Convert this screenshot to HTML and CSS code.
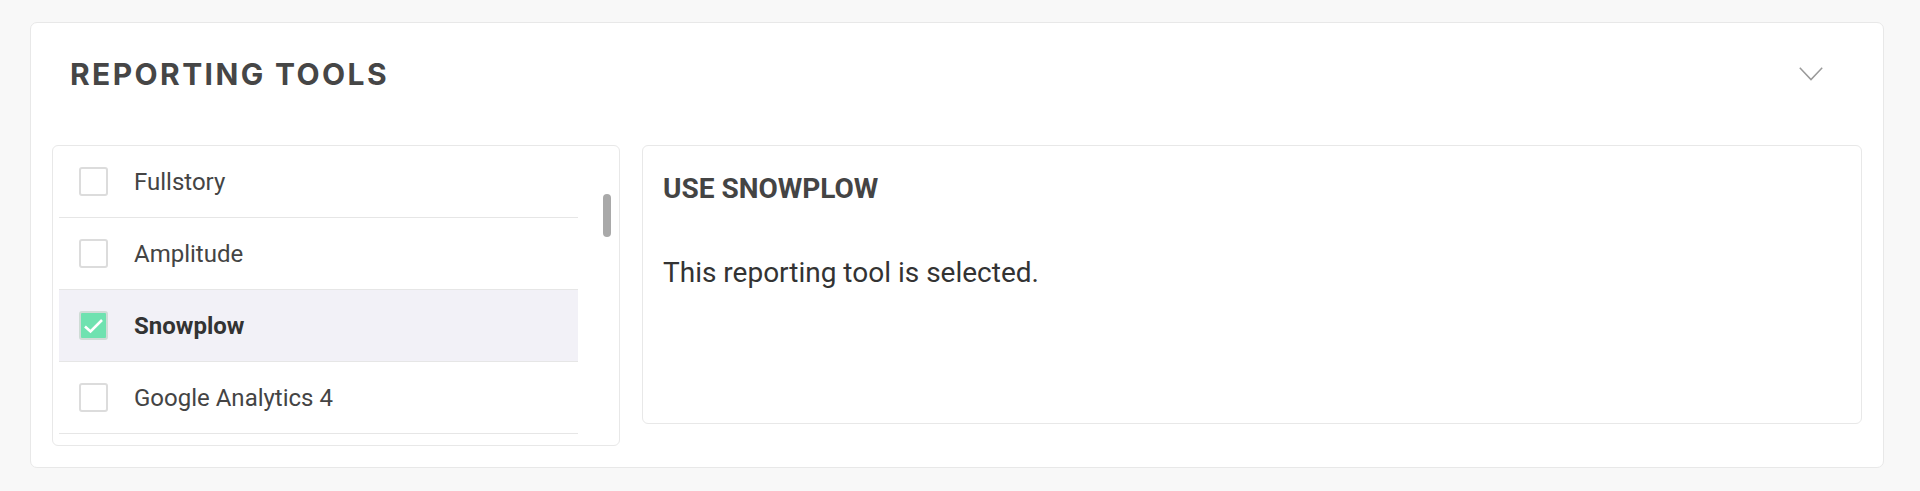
FILE: index.html
```html
<!DOCTYPE html>
<html lang="en">
<head>
    <meta charset="UTF-8">
    <meta name="viewport" content="width=device-width, initial-scale=1.0">
    <title>Reporting Tools</title>
    <link rel="stylesheet" href="styles.css">
</head>
<body>
    <section class="card">
        <div class="card-header">
            <h2 class="card-title">REPORTING TOOLS</h2>
            <svg class="chevron" width="24" height="14" viewBox="0 0 24 14">
                <polyline points="0.8,0.8 12,12.6 23.2,0.8" fill="none" stroke="#9a9a9a" stroke-width="1.5"/>
            </svg>
        </div>

        <div class="card-body">
            <div class="tool-panel">
                <ul class="tool-list">
                    <li class="tool-row"><span class="checkbox"></span><span class="tool-name">Fullstory</span></li>
                    <li class="tool-row"><span class="checkbox"></span><span class="tool-name">Amplitude</span></li>
                    <li class="tool-row selected">
                        <span class="checkbox checked">
                            <svg width="21" height="16" viewBox="0 0 21 16"><polyline points="2,8.5 7.5,13.5 19,2" fill="none" stroke="#fff" stroke-width="2.6"/></svg>
                        </span>
                        <span class="tool-name">Snowplow</span>
                    </li>
                    <li class="tool-row"><span class="checkbox"></span><span class="tool-name">Google Analytics 4</span></li>
                </ul>
                <div class="scroll-track"><div class="scroll-thumb"></div></div>
            </div>

            <div class="detail-panel">
                <h3 class="detail-title">USE SNOWPLOW</h3>
                <p class="detail-text">This reporting tool is selected.</p>
            </div>
        </div>
    </section>
</body>
</html>
```

FILE: styles.css
```css
body {
    margin: 0;
    padding: 22px 36px 0 30px;
    background-color: #f8f8f8;
    font-family: Roboto, 'Liberation Sans', sans-serif;
}

.card {
    background-color: #fff;
    border: 1px solid #e8e8e8;
    border-radius: 7px;
}

.card-header {
    height: 101px;
    display: flex;
    align-items: center;
    justify-content: space-between;
    padding: 0 60px 0 39px;
}

.card-title {
    margin: 0;
    font-family: Inter, 'Open Sans', sans-serif;
    font-weight: 700;
    font-size: 30px;
    letter-spacing: 2.4px;
    line-height: 36px;
    color: #464646;
}

.chevron {
    display: block;
}

.card-body {
    display: grid;
    grid-template-columns: 568px 1fr;
    gap: 22px;
    align-items: start;
    padding: 21px;
}

.tool-panel {
    height: 301px;
    box-sizing: border-box;
    border: 1px solid #e8e8e8;
    border-radius: 6px;
    display: flex;
    padding-left: 6px;
    overflow: hidden;
}

.tool-list {
    flex: 1;
    list-style: none;
    margin: 0;
    padding: 0;
}

.tool-row {
    height: 71px;
    display: flex;
    align-items: center;
    padding-left: 20px;
    border-bottom: 1px solid #e6e6e6;
    font-size: 24px;
    color: #444;
}

.tool-row.selected {
    background-color: #f2f1f7;
    font-weight: 700;
    color: #333;
}

.checkbox {
    width: 29px;
    height: 29px;
    box-sizing: border-box;
    border: 2px solid #dcdcdc;
    border-radius: 3px;
    background-color: #fff;
    margin-right: 26px;
    flex-shrink: 0;
    display: flex;
    align-items: center;
    justify-content: center;
}

.checkbox.checked {
    background-color: #6fe2b0;
    border-color: #cfdcd6;
}

.scroll-track {
    width: 8px;
    margin: 48px 8px 0 25px;
}

.scroll-thumb {
    height: 43px;
    border-radius: 4px;
    background-color: #a9a9a9;
}

.detail-panel {
    height: 279px;
    box-sizing: border-box;
    border: 1px solid #e8e8e8;
    border-radius: 6px;
    padding: 27px 20px;
}

.detail-title {
    margin: 0;
    font-size: 28px;
    font-weight: 700;
    line-height: 32px;
    color: #444;
}

.detail-text {
    margin: 52px 0 0;
    font-size: 28px;
    line-height: 32px;
    color: #333;
}
```
